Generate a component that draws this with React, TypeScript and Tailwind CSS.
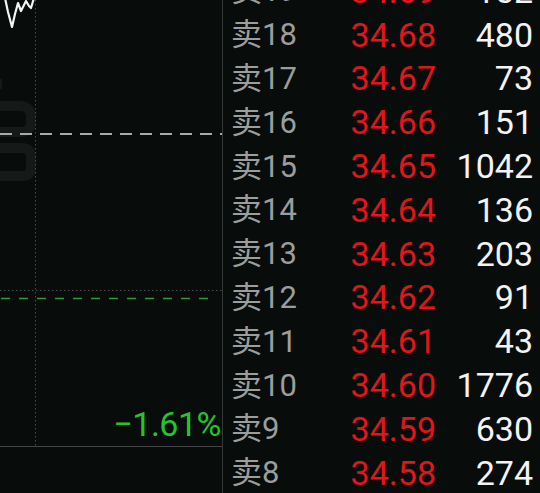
import React from 'react'

interface Level {
  label: string
  price: string
  volume: string
}

const levels: Level[] = [
  { label: '卖19', price: '34.69', volume: '152' },
  { label: '卖18', price: '34.68', volume: '480' },
  { label: '卖17', price: '34.67', volume: '73' },
  { label: '卖16', price: '34.66', volume: '151' },
  { label: '卖15', price: '34.65', volume: '1042' },
  { label: '卖14', price: '34.64', volume: '136' },
  { label: '卖13', price: '34.63', volume: '203' },
  { label: '卖12', price: '34.62', volume: '91' },
  { label: '卖11', price: '34.61', volume: '43' },
  { label: '卖10', price: '34.60', volume: '1776' },
  { label: '卖9', price: '34.59', volume: '630' },
  { label: '卖8', price: '34.58', volume: '274' },
]

const font = { fontFamily: 'Roboto, "Noto Sans CJK SC", sans-serif' }

function ChartPanel() {
  return (
    <div className="relative w-[223px] h-full border-r border-[#363838] overflow-hidden">
      {/* chart grid + price line */}
      <svg width="222" height="493" className="absolute left-0 top-0">
        {/* faint watermark */}
        <g fill="none" stroke="#151918" strokeWidth="10">
          <path d="M-10 84 L2 84" />
          <path d="M-20 106 L20 106 Q31 106 31 118 L31 122 Q31 132 20 132 L-20 132" />
          <path d="M-20 148 L22 148 Q31 148 31 158 L31 168 Q31 176 22 176 L-20 176" />
        </g>
        <line x1="35.5" y1="0" x2="35.5" y2="446" stroke="#4a4c4c" strokeWidth="1" strokeDasharray="1.5 2.5" />
        <line x1="0" y1="290.5" x2="222" y2="290.5" stroke="#4a4c4c" strokeWidth="1" strokeDasharray="1.5 2.5" />
        <line x1="0" y1="134" x2="222" y2="134" stroke="#a9abab" strokeWidth="2" strokeDasharray="12 8" />
        <line x1="1" y1="298.5" x2="210" y2="298.5" stroke="#2e9a37" strokeWidth="1.3" strokeDasharray="9 9" />
        <line x1="0" y1="446.5" x2="222" y2="446.5" stroke="#444646" strokeWidth="1.2" />
        <polyline
          points="5,-2 8,12 12,27 15,14 18,3 21,11 23,7 26,1 29,6 31,8 34,-2"
          fill="none"
          stroke="#f4f4f4"
          strokeWidth="2.2"
          strokeLinejoin="round"
        />
      </svg>
      <div
        className="absolute right-[1px] top-[404px] text-[34px] leading-[40px] text-[#24c52c] tracking-[-0.5px]"
        style={font}
      >
        −1.61%
      </div>
    </div>
  )
}

function OrderBook() {
  return (
    <div className="flex-1 overflow-hidden pl-[8px] pr-[7px]" style={font}>
      <div className="-mt-[31px]">
        {levels.map((l) => (
          <div key={l.label} className="grid grid-cols-[70px_1fr_97px] h-[43.8px] items-center leading-none">
            <span className="text-[31px] text-[#9c9d9d]">{l.label}</span>
            <span className="text-right text-[34px] text-[#e0161b]">{l.price}</span>
            <span className="text-right text-[34px] text-[#f3f3f3]">{l.volume}</span>
          </div>
        ))}
      </div>
    </div>
  )
}

export default function App() {
  return (
    <div className="flex w-[540px] h-[493px] bg-[#080c0b] overflow-hidden">
      <ChartPanel />
      <OrderBook />
    </div>
  )
}
